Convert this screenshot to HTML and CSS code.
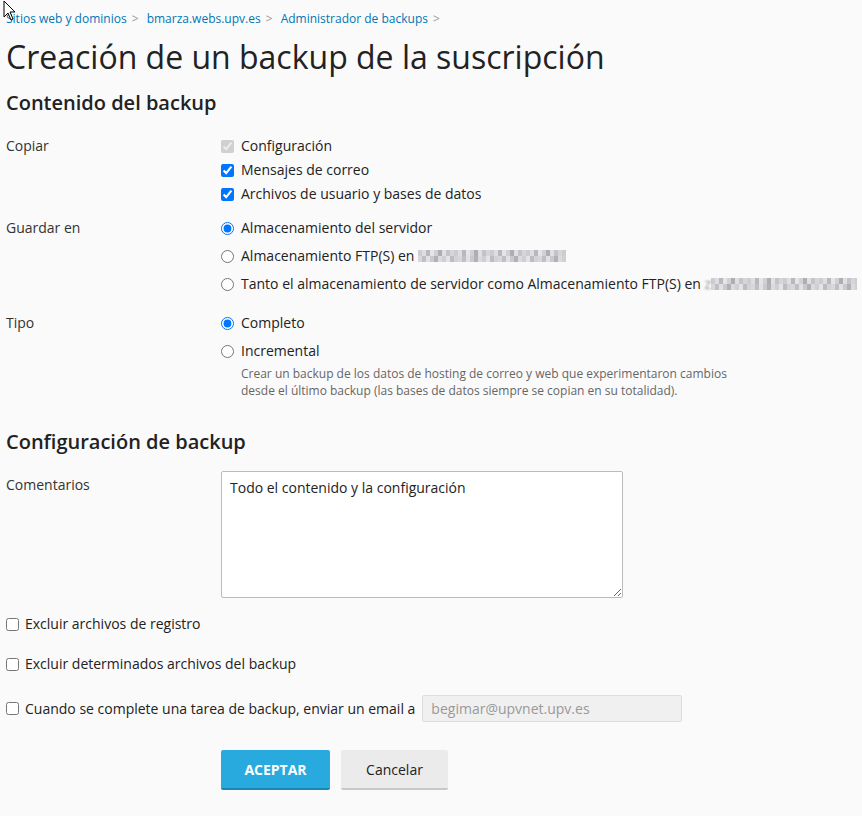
FILE: index.html
```html
<!DOCTYPE html>
<html lang="es">
<head>
<meta charset="utf-8">
<title>Creación de un backup de la suscripción</title>
<link rel="stylesheet" href="styles.css">
</head>
<body>
<svg class="cursor" width="14" height="22" viewBox="0 0 14 22"><path d="M1 1 L1 17 L5 13 L8 20 L10 19 L7 12 L12 12 Z" fill="#fff" stroke="#000" stroke-width="1"/></svg>
<nav class="crumbs">
  <a href="#">Sitios web y dominios</a><span class="sep">&gt;</span>
  <a href="#">bmarza.webs.upv.es</a><span class="sep">&gt;</span>
  <a href="#">Administrador de backups</a><span class="sep">&gt;</span>
</nav>
<h1 class="title">Creación de un backup de la suscripción</h1>

<h2 class="section">Contenido del backup</h2>
<div class="row r-copy">
  <div class="label">Copiar</div>
  <div class="field list-check">
    <label class="opt disabled"><input type="checkbox" checked disabled><span>Configuración</span></label>
    <label class="opt"><input type="checkbox" checked><span>Mensajes de correo</span></label>
    <label class="opt"><input type="checkbox" checked><span>Archivos de usuario y bases de datos</span></label>
  </div>
</div>
<div class="row r-store">
  <div class="label">Guardar en</div>
  <div class="field list-radio">
    <label class="opt"><input type="radio" name="store" checked><span>Almacenamiento del servidor</span></label>
    <label class="opt"><input type="radio" name="store"><span>Almacenamiento FTP(S) en&nbsp;</span><span class="mosaic mosaic-a"></span></label>
    <label class="opt"><input type="radio" name="store"><span>Tanto el almacenamiento de servidor como Almacenamiento FTP(S) en&nbsp;</span><span class="faded">z</span><span class="mosaic mosaic-b"></span></label>
  </div>
</div>
<div class="row r-type">
  <div class="label">Tipo</div>
  <div class="field list-radio">
    <label class="opt"><input type="radio" name="type" checked><span>Completo</span></label>
    <label class="opt"><input type="radio" name="type"><span>Incremental</span></label>
    <p class="hint">Crear un backup de los datos de hosting de correo y web que experimentaron cambios desde el último backup (las bases de datos siempre se copian en su totalidad).</p>
  </div>
</div>

<h2 class="section second">Configuración de backup</h2>
<div class="row r-comm">
  <div class="label">Comentarios</div>
  <div class="field">
    <textarea class="comments">Todo el contenido y la configuración</textarea>
  </div>
</div>
<label class="solo s1"><input type="checkbox"><span>Excluir archivos de registro</span></label>
<label class="solo s2"><input type="checkbox"><span>Excluir determinados archivos del backup</span></label>
<div class="solo email">
  <label class="email-label"><input type="checkbox"><span>Cuando se complete una tarea de backup, enviar un email a</span></label>
  <input class="mail" type="text" value="begimar@upvnet.upv.es" disabled>
</div>
<div class="buttons">
  <button class="btn primary">ACEPTAR</button>
  <button class="btn secondary">Cancelar</button>
</div>
</body>
</html>
```
FILE: styles.css
```css
html, body {
  margin: 0;
  background: #fafafa;
}
body {
  padding: 0 6px;
  font-family: "Open Sans", "Liberation Sans", sans-serif;
  font-size: 14px;
  color: #222;
  overflow: hidden;
}
.cursor {
  position: absolute;
  left: 3px;
  top: 0;
}
.crumbs {
  padding-top: 10px;
  font-size: 12px;
  line-height: 18px;
  color: #888;
}
.crumbs a {
  color: #0077b6;
  text-decoration: none;
}
.crumbs .sep {
  margin: 0 5px;
  color: #999;
}
.title {
  margin: 9px 0 0;
  font-size: 32px;
  font-weight: 400;
  line-height: 40px;
  color: #222;
}
.section {
  margin: 13px 0 20px;
  font-size: 20px;
  font-weight: 600;
  line-height: 26px;
  color: #222;
}
.section.second {
  margin-top: 30px;
}
.row {
  display: flex;
}
.r-copy { margin-bottom: 14px; }
.r-store { margin-bottom: 19px; }
.label {
  width: 215px;
  flex: none;
  line-height: 20px;
  color: #333;
}
.field {
  display: flex;
  flex-direction: column;
}
.opt {
  display: flex;
  align-items: center;
  line-height: 20px;
  white-space: nowrap;
}
.list-check .opt + .opt {
  margin-top: 4px;
}
.list-radio .opt + .opt {
  margin-top: 8px;
}
.opt input {
  margin: 0 7px 0 0;
  width: 13px;
  height: 13px;
  flex: none;
}
.faded {
  color: #999;
  filter: blur(0.8px);
}
.mosaic {
  display: inline-block;
  height: 12px;
  flex: none;
  background:
    repeating-linear-gradient(90deg, #cdcdd1 0 4px, #dedde2 4px 8px, #b9b9bd 8px 12px, #e6e4e8 12px 16px, #d2d0d4 16px 20px, #aeaeb2 20px 24px, #e0dfe2 24px 28px, #c4c4c8 28px 32px, #d8d4d8 32px 36px) top left / 100% 6px no-repeat,
    repeating-linear-gradient(90deg, #d8d8dc 0 4px, #c0c0c4 4px 8px, #e2e0e4 8px 12px, #cacacd 12px 16px, #b2b2b6 16px 20px, #dcdadd 20px 24px, #cfd0d4 24px 28px, #e4e4e6 28px 32px, #bdbdc1 32px 36px, #d4d2d6 36px 40px) bottom left / 100% 6px no-repeat;
}
.mosaic-a { width: 148px; }
.mosaic-b { width: 146px; }
.hint {
  margin: 4px 0 0 20px;
  width: 520px;
  font-size: 12px;
  line-height: 17px;
  color: #666;
}
.comments {
  display: block;
  width: 402px;
  height: 127px;
  box-sizing: border-box;
  margin: -4px 0 0;
  padding: 6px 8px;
  border: 1px solid #bbb;
  border-radius: 2px;
  background: #fff;
  font-family: inherit;
  font-size: 14px;
  line-height: 19px;
  color: #222;
  resize: both;
}
.solo {
  display: flex;
  align-items: center;
  line-height: 20px;
}
.s1 { margin-top: 16px; }
.s2 { margin-top: 20px; }
.email { margin-top: 21px; }
.solo input[type="checkbox"] {
  margin: 0 6px 0 0;
  width: 13px;
  height: 13px;
  flex: none;
}
.email-label {
  display: flex;
  align-items: center;
}
.mail {
  margin-left: 7px;
  width: 260px;
  height: 27px;
  box-sizing: border-box;
  padding: 0 8px;
  border: 1px solid #ddd;
  border-radius: 2px;
  background: #f0f0f0;
  font-family: inherit;
  font-size: 14px;
  color: #999;
}
.buttons {
  display: flex;
  gap: 11px;
  margin: 28px 0 0 215px;
}
.btn {
  height: 40px;
  padding: 0;
  border: 0;
  border-bottom: 2px solid #c8c8c8;
  border-radius: 2px;
  background: #ebebeb;
  font-family: inherit;
  font-size: 14px;
  color: #222;
}
.btn.primary {
  width: 109px;
  background: #28aadf;
  border-bottom-color: #1a86b8;
  color: #fff;
  font-weight: 700;
}
.btn.secondary {
  width: 107px;
}
```
